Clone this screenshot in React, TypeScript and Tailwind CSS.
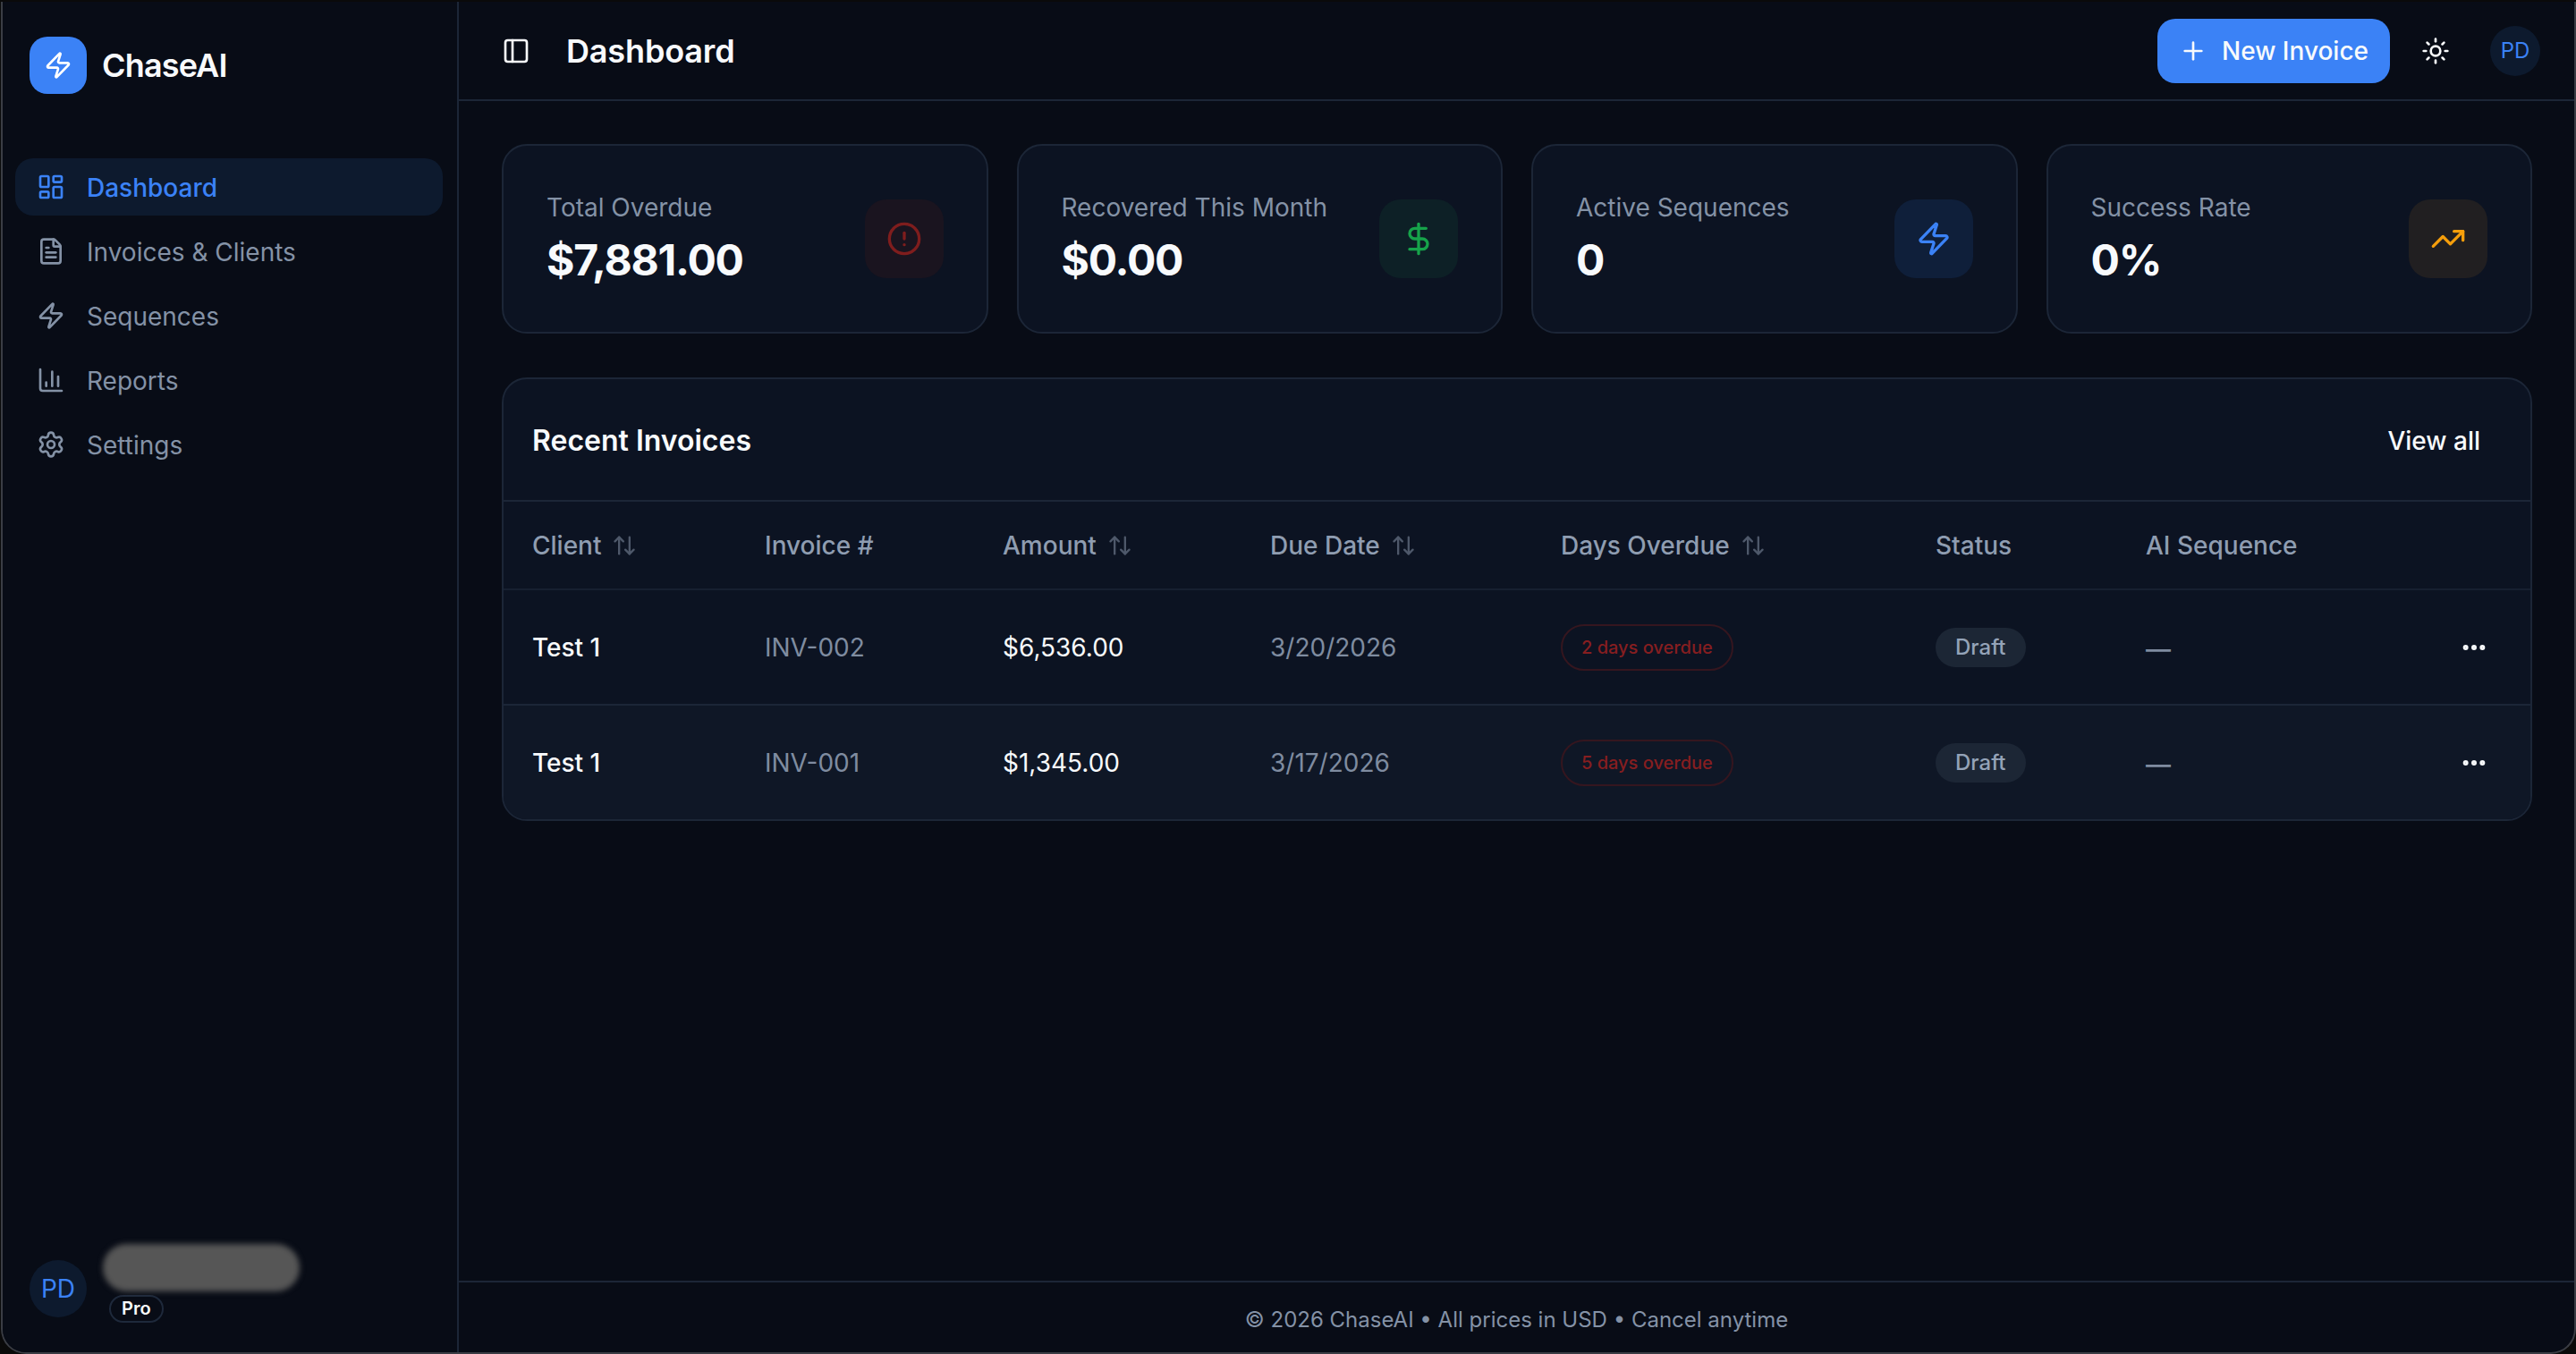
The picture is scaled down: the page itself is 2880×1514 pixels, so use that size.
import { AlertCircle, ArrowUpDown, ChartColumn, DollarSign, Ellipsis, FileText, LayoutDashboard, PanelLeft, Plus, Settings, Sun, TrendingUp, Zap } from 'lucide-react';

const nav = [
    { label: 'Dashboard', icon: LayoutDashboard, active: true },
    { label: 'Invoices & Clients', icon: FileText },
    { label: 'Sequences', icon: Zap },
    { label: 'Reports', icon: ChartColumn },
    { label: 'Settings', icon: Settings },
];

const invoices = [
    { client: 'Test 1', number: 'INV-002', amount: '$6,536.00', due: '3/20/2026', overdue: '2 days overdue' },
    { client: 'Test 1', number: 'INV-001', amount: '$1,345.00', due: '3/17/2026', overdue: '5 days overdue' },
];

function Sidebar() {
    return (
        <aside className="flex w-[510px] shrink-0 flex-col border-r-2 border-[#1c2637] bg-[#080c16]">
            <div className="flex items-center gap-[17px] pl-[30px] pt-[39px]">
                <div className="flex h-[64px] w-[64px] items-center justify-center rounded-[20px] bg-[#3b82f6]">
                    <Zap className="h-[32px] w-[32px] text-white" strokeWidth={2} />
                </div>
                <span className="text-[36px] font-semibold tracking-[-0.8px] text-[#f8fafc]">ChaseAI</span>
            </div>
            <nav className="mt-[72px] flex flex-col gap-[8px] pl-[14px] pr-[16px]">
                {nav.map((item) => (
                    <div
                        key={item.label}
                        className={
                            item.active
                                ? 'flex h-[64px] items-center gap-[24px] rounded-[20px] bg-[#0d1a2e] pl-[24px] text-[#3b82f6]'
                                : 'flex h-[64px] items-center gap-[24px] rounded-[20px] pl-[24px] text-[#8492a6]'
                        }
                    >
                        <item.icon className="h-[32px] w-[32px]" strokeWidth={2} />
                        <span className={item.active ? 'pt-[2px] text-[28px] font-medium' : 'pt-[2px] text-[28px]'}>{item.label}</span>
                    </div>
                ))}
            </nav>
            <div className="mt-auto flex items-end gap-[18px] pb-[33px] pl-[30px]">
                <div className="mb-[6px] flex h-[64px] w-[64px] items-center justify-center rounded-full bg-[#0d1a2e] text-[28px] text-[#3b82f6]">PD</div>
                <div className="flex flex-col items-start">
                    <div className="h-[53px] w-[220px] rounded-full bg-[#565656] blur-[3px]" />
                    <span className="ml-[7px] mt-[4px] rounded-full border-2 border-[#1e293b] px-[12px] text-[20px] font-semibold leading-[27px] text-[#f8fafc]">Pro</span>
                </div>
            </div>
        </aside>
    );
}

function Header() {
    return (
        <header className="flex h-[111px] shrink-0 items-center border-b-2 border-[#1c2637] pl-[48px] pr-[38px]">
            <PanelLeft className="h-[32px] w-[32px] text-[#f8fafc]" strokeWidth={2} />
            <h1 className="ml-[40px] text-[36px] font-semibold tracking-[-0.15px] text-[#f8fafc]">Dashboard</h1>
            <div className="ml-auto flex items-center">
                <button className="flex h-[72px] w-[260px] items-center gap-[16px] rounded-[20px] bg-[#3b82f6] pl-[24px] text-[28px] font-medium text-[#f8fafc]">
                    <Plus className="h-[32px] w-[32px]" strokeWidth={2} />
                    New Invoice
                </button>
                <Sun className="ml-[35px] h-[32px] w-[32px] text-[#f8fafc]" strokeWidth={2} />
                <div className="ml-[45px] flex h-[56px] w-[56px] items-center justify-center rounded-full bg-[#0d1a2e] text-[24px] text-[#3b82f6]">PD</div>
            </div>
        </header>
    );
}

function StatCard({ label, value, icon: Icon, box, color }: { label: string; value: string; icon: typeof Zap; box: string; color: string }) {
    return (
        <div className="flex h-[212px] items-center justify-between rounded-[28px] border-2 border-[#1c2637] bg-[#0c1322] pl-[48px] pr-[48px]">
            <div className="flex flex-col">
                <span className="text-[28px] leading-[40px] text-[#8492a6]">{label}</span>
                <span className="mb-[3px] mt-[11px] text-[48px] font-bold leading-[56px] tracking-[-1.2px] text-[#f8fafc]">{value}</span>
            </div>
            <div className={`flex h-[88px] w-[88px] items-center justify-center rounded-[24px] ${box}`}>
                <Icon className={`h-[40px] w-[40px] ${color}`} strokeWidth={2} />
            </div>
        </div>
    );
}

function SortHead({ label }: { label: string }) {
    return (
        <span className="flex items-center gap-[12px]">
            {label}
            <ArrowUpDown className="h-[28px] w-[28px] opacity-50" strokeWidth={2} />
        </span>
    );
}

function RecentInvoices() {
    return (
        <section className="mt-[49px] overflow-hidden rounded-[28px] border-2 border-[#1c2637] bg-[#0c1322]">
            <div className="flex h-[137px] items-center justify-between border-b-2 border-[#1c2637] pl-[32px] pr-[56px] pt-[2px]">
                <h2 className="text-[32px] font-semibold text-[#f8fafc]">Recent Invoices</h2>
                <span className="text-[28px] font-medium text-[#f8fafc]">View all</span>
            </div>
            <table className="w-full table-fixed border-collapse">
                <thead>
                    <tr className="h-[98px] border-b-2 border-[#172030] text-left text-[28px] font-medium text-[#8f9db1]">
                        <th className="w-[260px] pl-[32px] font-medium"><SortHead label="Client" /></th>
                        <th className="w-[266px] pl-[32px] font-medium">Invoice #</th>
                        <th className="w-[299px] pl-[32px] font-medium"><SortHead label="Amount" /></th>
                        <th className="w-[325px] pl-[32px] font-medium"><SortHead label="Due Date" /></th>
                        <th className="w-[419px] pl-[32px] font-medium"><SortHead label="Days Overdue" /></th>
                        <th className="w-[235px] pl-[32px] font-medium">Status</th>
                        <th className="pl-[32px] font-medium">AI Sequence</th>
                        <th className="w-[96px]" />
                    </tr>
                </thead>
                <tbody>
                    {invoices.map((inv, i) => (
                        <tr key={inv.number} className={i === 1 ? 'h-[128px] bg-[#0f1726] text-[28px]' : 'h-[129px] border-b-2 border-[#1c2637] text-[28px]'}>
                            <td className="pl-[32px] font-medium text-[#f8fafc]">{inv.client}</td>
                            <td className="pl-[32px] text-[#7f8ca0]">{inv.number}</td>
                            <td className="pl-[32px] text-[#f8fafc]">{inv.amount}</td>
                            <td className="pl-[32px] text-[#7f8ca0]">{inv.due}</td>
                            <td className="pl-[32px]">
                                <span className="inline-flex h-[52px] items-center rounded-full border-2 border-[#35161f] px-[21px] text-[20px] font-medium text-[#861e20]">{inv.overdue}</span>
                            </td>
                            <td className="pl-[32px]">
                                <span className="inline-flex h-[44px] items-center rounded-full bg-[#1c2635] px-[22px] text-[24px] font-medium text-[#94a3b8]">Draft</span>
                            </td>
                            <td className="pl-[32px] pt-[4px] font-medium text-[#7f8ca0]">—</td>
                            <td>
                                <Ellipsis className="ml-[17px] h-[32px] w-[32px] text-[#f8fafc]" strokeWidth={2.5} />
                            </td>
                        </tr>
                    ))}
                </tbody>
            </table>
        </section>
    );
}

export default function App() {
    return (
        <div className="h-[1514px] w-[2880px] overflow-hidden bg-[#0a0a0a] pl-[1px] pt-[2px] font-['Inter',sans-serif]">
            <div className="flex h-full overflow-hidden rounded-bl-[28px] rounded-br-[28px] border-2 border-t-0 border-[#3a3d44] bg-[#080c16]">
                <Sidebar />
                <main className="flex min-w-0 flex-1 flex-col">
                    <Header />
                    <div className="flex-1 pl-[48px] pr-[47px] pt-[48px]">
                        <div className="grid grid-cols-4 gap-[32px]">
                            <StatCard label="Total Overdue" value="$7,881.00" icon={AlertCircle} box="bg-[#1a141f]" color="text-[#7f1d1d]" />
                            <StatCard label="Recovered This Month" value="$0.00" icon={DollarSign} box="bg-[#0d2026]" color="text-[#16a34a]" />
                            <StatCard label="Active Sequences" value="0" icon={Zap} box="bg-[#0f1f3a]" color="text-[#3b82f6]" />
                            <StatCard label="Success Rate" value="0%" icon={TrendingUp} box="bg-[#211f21]" color="text-[#f59e0b]" />
                        </div>
                        <RecentInvoices />
                    </div>
                    <footer className="flex h-[80px] shrink-0 items-center justify-center border-t-2 border-[#1c2637] pt-[6px] text-[24px] text-[#8492a6]">
                        © 2026 ChaseAI • All prices in USD • Cancel anytime
                    </footer>
                </main>
            </div>
        </div>
    );
}
